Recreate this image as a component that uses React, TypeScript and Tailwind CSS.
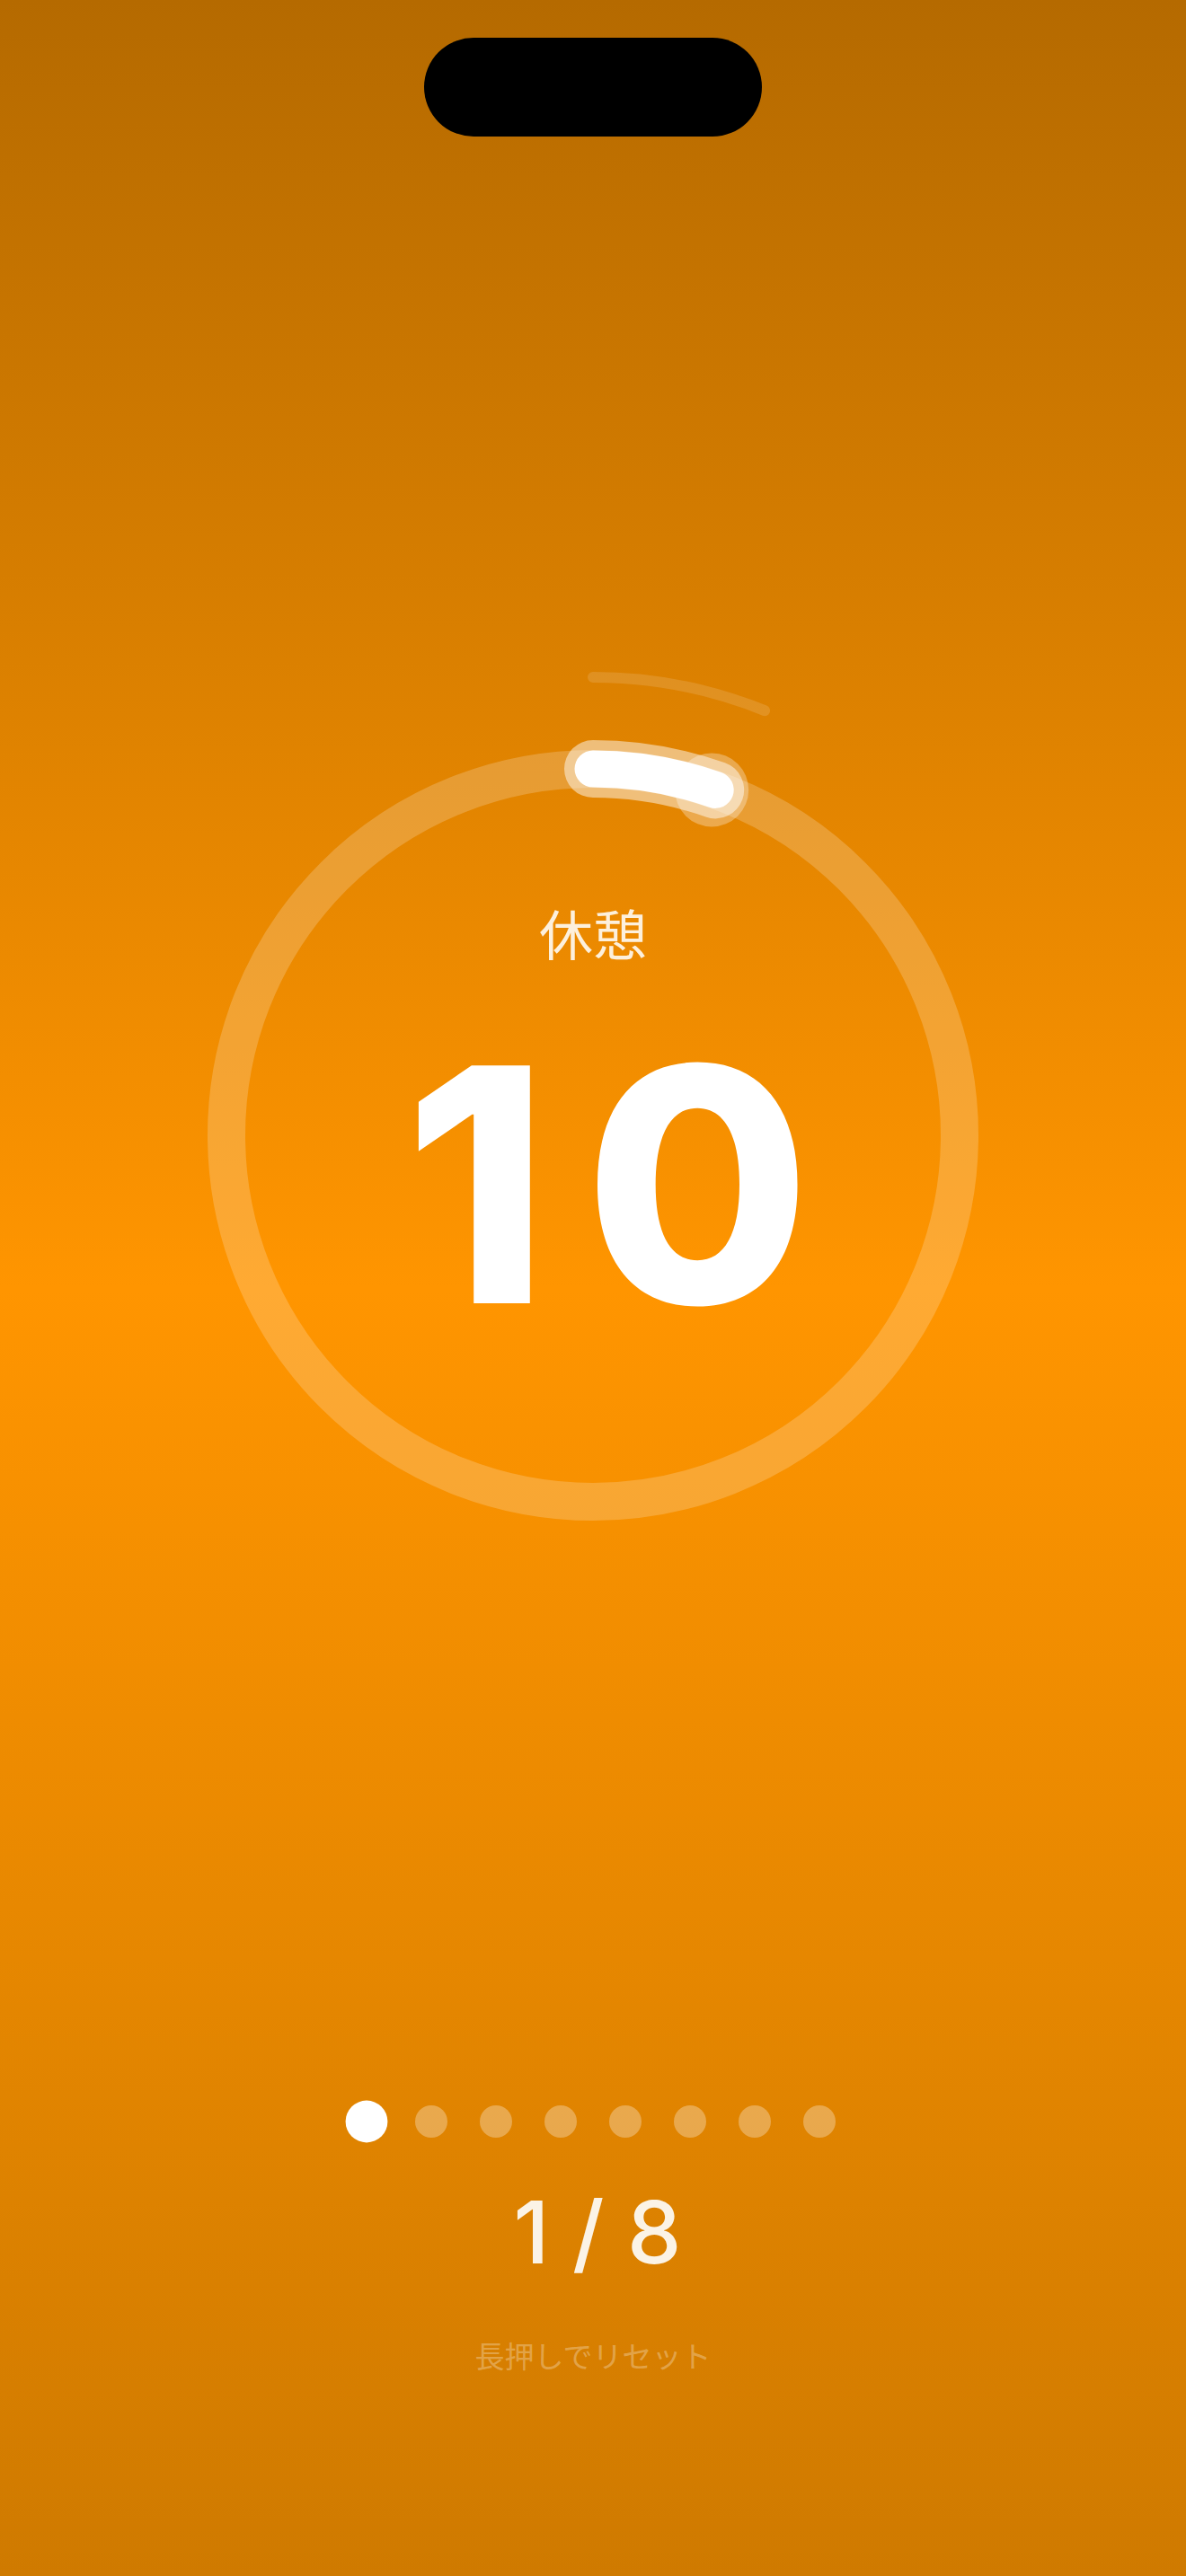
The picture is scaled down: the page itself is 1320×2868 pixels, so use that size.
import React from "react";

const R = 408;
function pt(r: number, deg: number) {
  const a = (deg * Math.PI) / 180;
  return { x: 520 + r * Math.sin(a), y: 520 - r * Math.cos(a) };
}

function Ring() {
  const end = pt(R, 19.5);
  const outerEnd = pt(510, 22);
  const progress = `M 520 ${520 - R} A ${R} ${R} 0 0 1 ${end.x} ${end.y}`;
  const outer = `M 520 10 A 510 510 0 0 1 ${outerEnd.x} ${outerEnd.y}`;
  return (
    <svg className="absolute inset-0" width={1040} height={1040} viewBox="0 0 1040 1040">
      <circle cx={520} cy={520} r={R} fill="none" stroke="white" strokeOpacity={0.2} strokeWidth={42} />
      <path d={outer} fill="none" stroke="white" strokeOpacity={0.13} strokeWidth={12} strokeLinecap="round" />
      <path d={progress} fill="none" stroke="white" strokeOpacity={0.48} strokeWidth={64} strokeLinecap="round" />
      <circle cx={end.x - 4} cy={end.y} r={41} fill="white" fillOpacity={0.3} />
      <path d={progress} fill="none" stroke="white" strokeWidth={41} strokeLinecap="round" />
    </svg>
  );
}

export default function App() {
  const dots = [0, 1, 2, 3, 4, 5, 6, 7];
  return (
    <div
      className="w-[1320px] h-[2868px] flex flex-col items-center overflow-hidden bg-[linear-gradient(180deg,#b56a00_0%,#ff9500_50%,#cf7a00_100%)]"
      style={{ fontFamily: "Inter, 'Noto Sans CJK JP', sans-serif" }}
    >
      <div className="mt-[42px] w-[376px] h-[110px] rounded-full bg-black shrink-0" />

      <div className="relative mt-[592px] w-[1040px] h-[1040px] shrink-0 flex flex-col items-center">
        <Ring />
        <div
          className="relative mt-[264px] text-[60px] leading-[60px] text-[#fdf0dc] font-normal"
          style={{ fontFamily: "'Noto Sans CJK JP', sans-serif" }}
        >
          休憩
        </div>
        <div className="relative mt-[69px] pl-[72px] text-[364px] leading-[364px] font-extrabold text-white tracking-[40px]">
          10
        </div>
      </div>

      <div className="mt-[560px] flex items-center gap-[36px] h-[36px] shrink-0">
        {dots.map((d) => (
          <div
            key={d}
            className={
              d === 0
                ? "w-[36px] h-[36px] rounded-full bg-white scale-[1.3]"
                : "w-[36px] h-[36px] rounded-full bg-white/30"
            }
          />
        ))}
      </div>

      <div className="mt-[57px] pl-[10px] text-[96px] leading-[96px] font-medium text-[#fbf3e6] whitespace-pre">
        1 / 8
      </div>

      <div
        className="mt-[73px] text-[33px] leading-[33px] text-white/30"
        style={{ fontFamily: "'Noto Sans CJK JP', sans-serif" }}
      >
        長押しでリセット
      </div>
    </div>
  );
}
